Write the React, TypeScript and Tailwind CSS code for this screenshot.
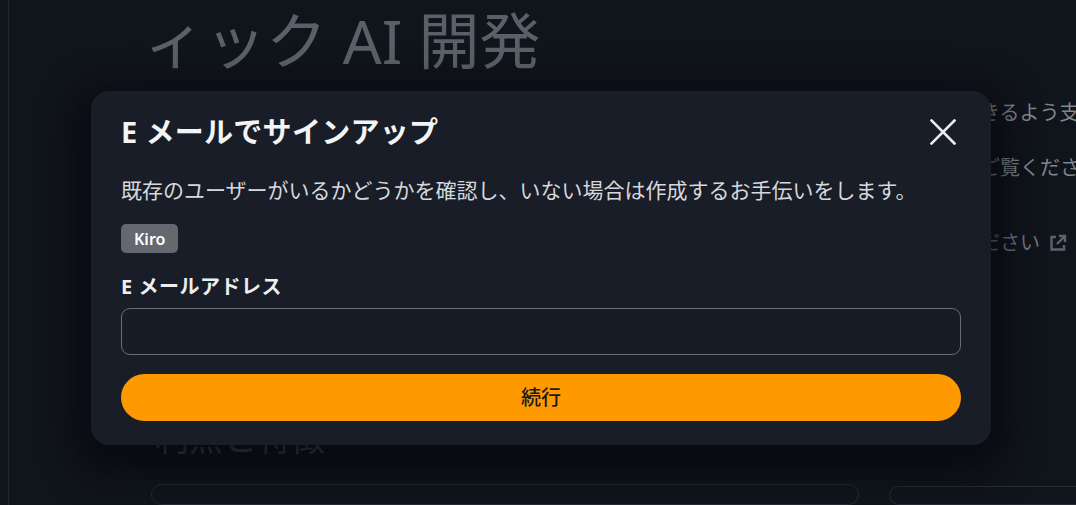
import React from "react";

const font = "font-['Noto_Sans','Noto_Sans_CJK_JP',sans-serif]";

const CloseIcon = () => (
	<svg width="26" height="26" viewBox="0 0 26 26" fill="none">
		<path d="M1.5 1.5 L24.5 24.5 M24.5 1.5 L1.5 24.5" stroke="#ececee" strokeWidth="2.6" strokeLinecap="square" />
	</svg>
);

const ExternalIcon = () => (
	<svg width="20" height="20" viewBox="0 0 20 20" fill="none" stroke="#5d636d" strokeWidth="2.4">
		<path d="M8 4 H3.5 V16.5 H16 V12" />
		<path d="M11 3 H17 V9 M17 3 L9 11" />
	</svg>
);

const SignUpModal = () => {
	return (
		<div className="absolute left-[91px] top-[91px] w-[900px] rounded-[18px] bg-[#181d27] px-[30px] pt-[23px] pb-[24px] shadow-[0_12px_36px_12px_rgba(4,7,12,0.75)]">
			{/* Header */}
			<div className="flex items-center justify-between">
				<h2 className="text-[29px] leading-[36px] font-bold tracking-[0.3px] text-[#f3f4f6]">E メールでサインアップ</h2>
				<button className="mr-[3px] flex h-[30px] w-[30px] items-center justify-center">
					<CloseIcon />
				</button>
			</div>

			<p className="mt-[26px] text-[21px] leading-[28px] text-[#d6d8dc]">
				既存のユーザーがいるかどうかを確認し、いない場合は作成するお手伝いをします。
			</p>

			<div className="mt-[20px] flex">
				<span className="flex h-[29px] items-center rounded-[5px] bg-[#666871] px-[13px] text-[16px] font-semibold text-white">
					Kiro
				</span>
			</div>

			<label className="mt-[20px] block text-[20px] leading-[28px] font-bold tracking-[0.5px] text-[#eceef1]">
				E メールアドレス
			</label>
			<input
				type="email"
				className="mt-[7px] block h-[47px] w-full rounded-[9px] border border-[#6b6c77] bg-[#181c26] px-4 text-[18px] text-white outline-none"
			/>

			<button className="mt-[19px] flex h-[47px] w-full items-center justify-center rounded-full bg-[#ff9900] text-[20px] font-medium text-[#16191f]">
				続行
			</button>
		</div>
	);
};

export default function App() {
	return (
		<div className={`relative h-[505px] w-full overflow-hidden bg-[#10141b] ${font}`}>
			<div className="flex h-full">
				{/* left rail */}
				<div className="w-[9px] shrink-0 border-r border-[#232831]" />

				<div className="flex flex-1 gap-[30px] pl-[142px]">
					{/* main column */}
					<div className="flex w-[708px] shrink-0 flex-col">
						<h1 className="mt-[6px] ml-[-7px] text-[61px] leading-[70px] whitespace-nowrap text-[#5b5f67]">
							ィック AI 開発
						</h1>
						<h2 className="mt-[340px] ml-[4px] text-[34px] leading-[44px] text-[#4c5059]">利点と特徴</h2>
						<div className="mt-[24px] h-[200px] rounded-[30px] border border-[#262b34] bg-[#10141b]" />
					</div>

					{/* side column */}
					<div className="flex flex-1 flex-col text-[20px] whitespace-nowrap text-[#80858e]">
						<p className="mt-[98px] ml-[11px] leading-[30px]">安全にできるよう支援します</p>
						<p className="mt-[25px] ml-[11px] leading-[30px]">ガイドをご覧ください</p>
						<p className="mt-[45px] ml-[31px] flex items-center gap-[8px] leading-[30px] text-[#6f7580]">
							ご覧ください <ExternalIcon />
						</p>
						<div className="mt-[228px] h-[200px] rounded-[30px] border border-[#262b34] bg-[#10141b]" />
					</div>
				</div>
			</div>

			<SignUpModal />
		</div>
	);
}
